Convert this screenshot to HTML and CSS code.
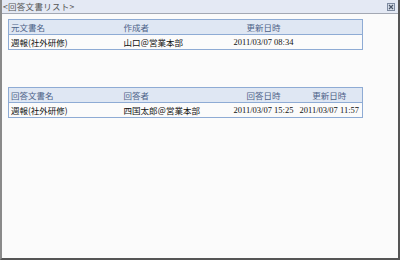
FILE: index.html
```html
<!DOCTYPE html>
<html lang="ja">
<head>
    <meta charset="UTF-8">
    <title>回答文書リスト</title>
    <link rel="stylesheet" href="styles.css">
</head>
<body>
    <div class="window">
        <div class="titlebar">
            <span class="title">&lt;回答文書リスト&gt;</span>
            <span class="close">
                <svg width="8" height="8" viewBox="0 0 8 8">
                    <rect x="0.5" y="0.5" width="7" height="7" fill="#d6deea" stroke="#7d8aa0"/>
                    <path d="M2 2 L6 6 M6 2 L2 6" stroke="#4a5568" stroke-width="1.2"/>
                </svg>
            </span>
        </div>

        <div class="content">
            <table class="list">
                <colgroup>
                    <col class="c-name"><col class="c-user"><col class="c-date"><col class="c-date">
                </colgroup>
                <tr class="head">
                    <th class="left">元文書名</th>
                    <th class="left">作成者</th>
                    <th>更新日時</th>
                    <th></th>
                </tr>
                <tr>
                    <td>週報(社外研修)</td>
                    <td>山口＠営業本部</td>
                    <td class="date">2011/03/07 08:34</td>
                    <td></td>
                </tr>
            </table>

            <table class="list second">
                <colgroup>
                    <col class="c-name"><col class="c-user"><col class="c-date"><col class="c-date">
                </colgroup>
                <tr class="head">
                    <th class="left">回答文書名</th>
                    <th class="left">回答者</th>
                    <th>回答日時</th>
                    <th>更新日時</th>
                </tr>
                <tr>
                    <td>週報(社外研修)</td>
                    <td>四国太郎＠営業本部</td>
                    <td class="date">2011/03/07 15:25</td>
                    <td class="date">2011/03/07 11:57</td>
                </tr>
            </table>
        </div>
    </div>
</body>
</html>
```

FILE: styles.css
```css
body { margin: 0; font-family: "Noto Sans CJK JP", sans-serif; }
.window { width: 400px; height: 260px; box-sizing: border-box; background: #fbfbfb; border-left: 2px solid #8a8a8a; border-right: 2px solid #555; border-bottom: 2px solid #555; }
.titlebar { height: 13px; display: flex; align-items: center; justify-content: space-between; background: #e4e9f4; border-bottom: 1px solid #a3a8b3; padding: 0 3px 0 1px; }
.title { font-size: 8.5px; line-height: 13px; color: #555; letter-spacing: 0.3px; }
.close { display: flex; margin-top: 1px; }
.content { padding: 5px 0 0 6px; }
.list { width: 355px; border-collapse: collapse; border: 1px solid #8eabd4; table-layout: fixed; font-size: 8.5px; color: #111; }
.list.second { margin-top: 37px; }
.c-name { width: 113px; }
.c-user { width: 109px; }
.c-date { width: 66px; }
.list th, .list td { height: 14px; padding: 0 2px; white-space: nowrap; line-height: 14px; }
.list th { font-weight: normal; color: #4d6288; text-align: center; }
.list th.left { text-align: left; }
.head { background: #dfe7f3; border-bottom: 1px solid #8eabd4; }
.list td.date { font-family: "Liberation Serif", serif; font-size: 8.5px; text-align: center; }
```
